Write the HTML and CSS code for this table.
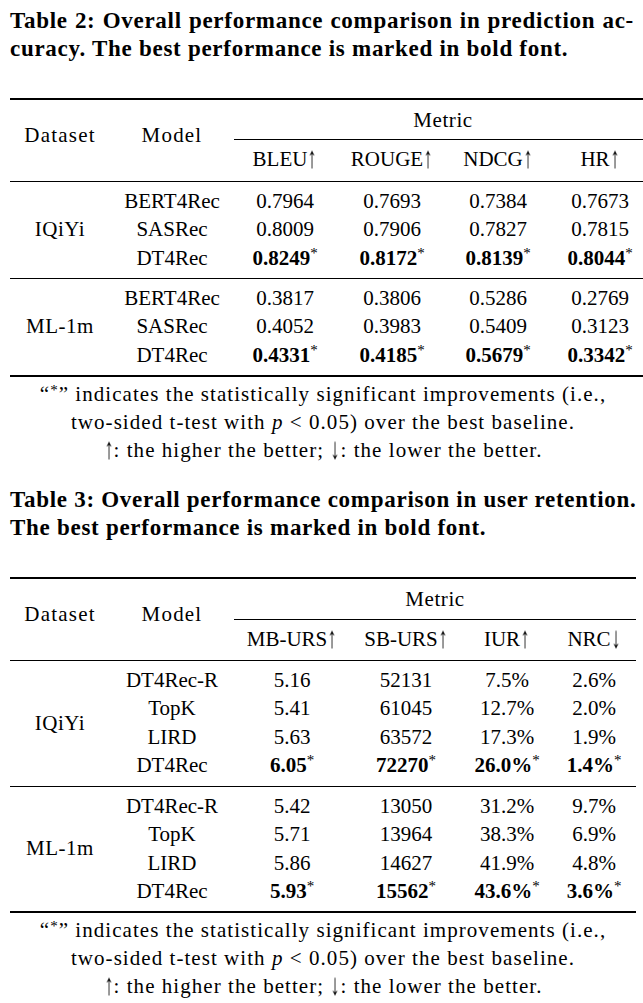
FILE: index.html
```html
<!DOCTYPE html>
<html lang="en">
<head>
<meta charset="utf-8">
<title>Tables</title>
<link rel="stylesheet" href="styles.css">
</head>
<body>
<div class="page">
  <div class="caption cap-first">
    <div class="cap-line fill">Table 2: Overall performance comparison in prediction ac-</div>
    <div class="cap-line">curacy. The best performance is marked in bold font.</div>
  </div>

  <table class="tbl t2">
    <colgroup>
      <col class="c-ds"><col class="c-model"><col class="c-a"><col class="c-b"><col class="c-c"><col class="c-d">
    </colgroup>
    <thead>
      <tr class="hr1">
        <th rowspan="2" class="span-h">Dataset</th>
        <th rowspan="2" class="span-h">Model</th>
        <th colspan="4" class="metric">Metric</th>
      </tr>
      <tr class="hr2">
        <th>BLEU<span class="ar">↑</span></th><th>ROUGE<span class="ar">↑</span></th><th>NDCG<span class="ar">↑</span></th><th>HR<span class="ar">↑</span></th>
      </tr>
    </thead>
    <tbody class="grp g1">
      <tr class="first"><td rowspan="3" class="ds">IQiYi</td><td>BERT4Rec</td><td>0.7964</td><td>0.7693</td><td>0.7384</td><td>0.7673</td></tr>
      <tr><td>SASRec</td><td>0.8009</td><td>0.7906</td><td>0.7827</td><td>0.7815</td></tr>
      <tr class="last"><td>DT4Rec</td><td><b>0.8249</b><sup>*</sup></td><td><b>0.8172</b><sup>*</sup></td><td><b>0.8139</b><sup>*</sup></td><td><b>0.8044</b><sup>*</sup></td></tr>
    </tbody>
    <tbody class="grp g2">
      <tr class="first"><td rowspan="3" class="ds">ML-1m</td><td>BERT4Rec</td><td>0.3817</td><td>0.3806</td><td>0.5286</td><td>0.2769</td></tr>
      <tr><td>SASRec</td><td>0.4052</td><td>0.3983</td><td>0.5409</td><td>0.3123</td></tr>
      <tr class="last"><td>DT4Rec</td><td><b>0.4331</b><sup>*</sup></td><td><b>0.4185</b><sup>*</sup></td><td><b>0.5679</b><sup>*</sup></td><td><b>0.3342</b><sup>*</sup></td></tr>
    </tbody>
  </table>

  <div class="notes">
    <div>“<sup class="qs">*</sup>” indicates the statistically significant improvements (i.e.,</div>
    <div>two-sided t-test with <i>p</i> &lt; 0.05) over the best baseline.</div>
    <div><span class="ar">↑</span>: the higher the better; <span class="ar">↓</span>: the lower the better.</div>
  </div>

  <div class="caption cap-second">
    <div class="cap-line">Table 3: Overall performance comparison in user retention.</div>
    <div class="cap-line">The best performance is marked in bold font.</div>
  </div>

  <table class="tbl t3">
    <colgroup>
      <col class="c-ds"><col class="c-model"><col class="c-a"><col class="c-b"><col class="c-c"><col class="c-d">
    </colgroup>
    <thead>
      <tr class="hr1">
        <th rowspan="2" class="span-h">Dataset</th>
        <th rowspan="2" class="span-h">Model</th>
        <th colspan="4" class="metric">Metric</th>
      </tr>
      <tr class="hr2">
        <th>MB-URS<span class="ar">↑</span></th><th>SB-URS<span class="ar">↑</span></th><th>IUR<span class="ar">↑</span></th><th>NRC<span class="ar">↓</span></th>
      </tr>
    </thead>
    <tbody class="grp g1">
      <tr class="first"><td rowspan="4" class="ds">IQiYi</td><td>DT4Rec-R</td><td>5.16</td><td>52131</td><td>7.5%</td><td>2.6%</td></tr>
      <tr><td>TopK</td><td>5.41</td><td>61045</td><td>12.7%</td><td>2.0%</td></tr>
      <tr><td>LIRD</td><td>5.63</td><td>63572</td><td>17.3%</td><td>1.9%</td></tr>
      <tr class="last"><td>DT4Rec</td><td><b>6.05</b><sup>*</sup></td><td><b>72270</b><sup>*</sup></td><td><b>26.0%</b><sup>*</sup></td><td><b>1.4%</b><sup>*</sup></td></tr>
    </tbody>
    <tbody class="grp g2">
      <tr class="first"><td rowspan="4" class="ds">ML-1m</td><td>DT4Rec-R</td><td>5.42</td><td>13050</td><td>31.2%</td><td>9.7%</td></tr>
      <tr><td>TopK</td><td>5.71</td><td>13964</td><td>38.3%</td><td>6.9%</td></tr>
      <tr><td>LIRD</td><td>5.86</td><td>14627</td><td>41.9%</td><td>4.8%</td></tr>
      <tr class="last"><td>DT4Rec</td><td><b>5.93</b><sup>*</sup></td><td><b>15562</b><sup>*</sup></td><td><b>43.6%</b><sup>*</sup></td><td><b>3.6%</b><sup>*</sup></td></tr>
    </tbody>
  </table>

  <div class="notes">
    <div>“<sup class="qs">*</sup>” indicates the statistically significant improvements (i.e.,</div>
    <div>two-sided t-test with <i>p</i> &lt; 0.05) over the best baseline.</div>
    <div><span class="ar">↑</span>: the higher the better; <span class="ar">↓</span>: the lower the better.</div>
  </div>
</div>
</body>
</html>
```

FILE: styles.css
```css
html, body {
  margin: 0;
  padding: 0;
  background: #ffffff;
  overflow: hidden;
}

body {
  font-family: "Liberation Serif", "Times New Roman", serif;
  color: #000000;
  width: 643px;
  height: 1003px;
}

.page {
  padding: 7px 0 0 10px;
  width: 633px;
}

/* captions */
.caption {
  width: 630px;
  font-weight: bold;
  font-size: 23px;
  line-height: 28px;
  letter-spacing: 0.72px;
}

.cap-line {
  white-space: nowrap;
}

.cap-line.fill {
  text-align: justify;
  text-align-last: justify;
  width: 624px;
}

.cap-second {
  margin-top: 22px;
}

/* tables */
.tbl {
  border-collapse: collapse;
  table-layout: fixed;
  font-size: 21px;
  line-height: 28.4px;
  margin-top: 35px;
}

.t2 { width: 642px; }
.t3 { width: 626px; }

.t2 .c-ds { width: 100px; }
.t2 .c-model { width: 124px; }
.t2 .c-a { width: 102px; }
.t2 .c-b { width: 112px; }
.t2 .c-c { width: 100px; }
.t2 .c-d { width: 104px; }

.t3 .c-ds { width: 100px; }
.t3 .c-model { width: 124px; }
.t3 .c-a { width: 116px; }
.t3 .c-b { width: 112px; }
.t3 .c-c { width: 90px; }
.t3 .c-d { width: 84px; }

.tbl th,
.tbl td {
  padding: 0;
  text-align: center;
  font-weight: normal;
  white-space: nowrap;
  vertical-align: top;
}

.tbl thead {
  border-top: 2px solid #000;
}

.hr1 th {
  padding-top: 6px;
  padding-bottom: 5px;
}

.metric {
  border-bottom: 1px solid #000;
  letter-spacing: 0.6px;
}

.tbl th.span-h {
  vertical-align: middle;
  padding-top: 0;
  padding-bottom: 10px;
  letter-spacing: 1.2px;
}

.hr2 th {
  padding-top: 5px;
  padding-bottom: 7px;
}

.grp {
  border-top: 1px solid #000;
}

.grp tr.first td {
  padding-top: 5px;
}

.grp tr.last td {
  padding-bottom: 6px;
}

.tbl td.ds {
  vertical-align: middle;
  padding-top: 5px;
  padding-bottom: 6px;
  letter-spacing: 0.5px;
}

.tbl .g2 {
  border-bottom: 2px solid #000;
}

.tbl b {
  font-weight: bold;
}

.tbl sup {
  font-size: 15px;
  line-height: 0;
  vertical-align: 7px;
  font-weight: normal;
}

/* arrows: tall, thin, like the math arrows of the original */
.ar {
  display: inline-block;
  font-size: 20px;
  line-height: 1;
  color: #000;
  transform: scale(0.9, 1.5);
  transform-origin: 50% 70%;
  will-change: transform;
  letter-spacing: 0;
}

/* notes */
.notes {
  width: 626px;
  text-align: center;
  font-size: 21px;
  line-height: 28px;
  padding-top: 3px;
  letter-spacing: 1.05px;
}

.notes sup.qs {
  font-size: 15px;
  line-height: 0;
  vertical-align: 6px;
}
```
